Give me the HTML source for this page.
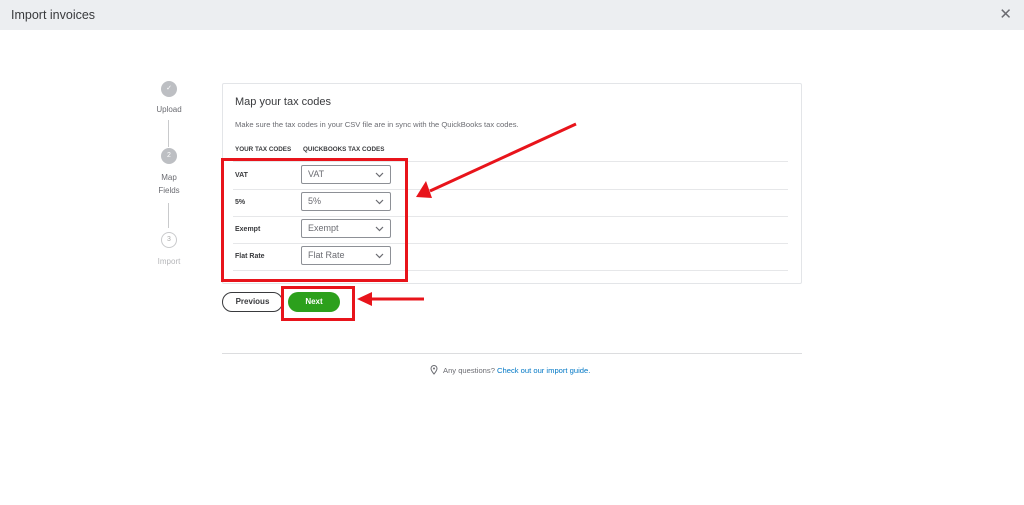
<!DOCTYPE html>
<html><head><meta charset="utf-8"><style>
*{margin:0;padding:0;box-sizing:border-box}
body{width:1024px;height:505px;background:#fff;font-family:"Liberation Sans",sans-serif;color:#393a3d;position:relative;overflow:hidden}
.hdr{position:absolute;left:0;top:0;width:1024px;height:30px;background:#eceef1}
.hdr .t{position:absolute;left:11px;top:8px;font-size:12.5px;color:#393a3d}
.hdr .x{position:absolute;right:12px;top:5px;font-size:15px;color:#6b6c72}
.abs{position:absolute}
.step{position:absolute;width:16px;height:16px;border-radius:50%;left:161px;font-size:7px;color:#fff;text-align:center;line-height:16px}
.lbl{position:absolute;font-size:8px;color:#6b6c72;width:40px;left:149px;text-align:center;line-height:13px}
.vl{position:absolute;left:168px;width:1px;background:#c9cacc}
.card{position:absolute;left:222px;top:83px;width:580px;height:201px;border:1px solid #e3e5e8;border-radius:2px}
.hl{position:absolute;left:233px;width:555px;height:1px;background:#e6e7e9}
.rl{position:absolute;left:235px;font-size:7px;color:#393a3d;font-weight:bold}
.sel{position:absolute;left:301px;width:90px;height:19px;border:1px solid #8d9096;border-radius:2px;font-size:9px;color:#6b6c72;padding:3px 6px}
.sel svg{position:absolute;right:6px;top:6px}
</style></head><body>
<div class="hdr"><span class="t">Import invoices</span><span class="x">✕</span></div>

<div class="step" style="top:81px;background:#bdbfc3">✓</div>
<div class="lbl" style="top:103px">Upload</div>
<div class="vl" style="top:120px;height:27px"></div>
<div class="step" style="top:148px;background:#bdbfc3">2</div>
<div class="lbl" style="top:171px">Map<br>Fields</div>
<div class="vl" style="top:203px;height:25px"></div>
<div class="step" style="top:232px;background:#fff;border:1px solid #c9cacc;color:#aaa;line-height:14px">3</div>
<div class="lbl" style="top:255px;color:#b5b6b9">Import</div>

<div class="card"></div>
<div class="abs" style="left:235px;top:96px;font-size:11px;color:#393a3d">Map your tax codes</div>
<div class="abs" style="left:235px;top:120px;font-size:7.6px;color:#6b6c72">Make sure the tax codes in your CSV file are in sync with the QuickBooks tax codes.</div>
<div class="abs" style="left:235px;top:146px;font-size:6.3px;font-weight:bold;color:#393a3d">YOUR TAX CODES</div>
<div class="abs" style="left:303px;top:146px;font-size:6.3px;font-weight:bold;color:#393a3d">QUICKBOOKS TAX CODES</div>
<div class="hl" style="top:161px"></div>
<div class="hl" style="top:189px"></div>
<div class="hl" style="top:216px"></div>
<div class="hl" style="top:243px"></div>
<div class="hl" style="top:270px"></div>

<div class="rl" style="top:172px">VAT</div>
<div class="rl" style="top:199px">5%</div>
<div class="rl" style="top:226px">Exempt</div>
<div class="rl" style="top:253px">Flat Rate</div>

<div class="sel" style="top:165px">VAT<svg width="9" height="6"><path d="M1 1L4.5 4.5L8 1" stroke="#6b6c72" fill="none" stroke-width="1.2"/></svg></div>
<div class="sel" style="top:192px">5%<svg width="9" height="6"><path d="M1 1L4.5 4.5L8 1" stroke="#6b6c72" fill="none" stroke-width="1.2"/></svg></div>
<div class="sel" style="top:219px">Exempt<svg width="9" height="6"><path d="M1 1L4.5 4.5L8 1" stroke="#6b6c72" fill="none" stroke-width="1.2"/></svg></div>
<div class="sel" style="top:246px">Flat Rate<svg width="9" height="6"><path d="M1 1L4.5 4.5L8 1" stroke="#6b6c72" fill="none" stroke-width="1.2"/></svg></div>

<div class="abs" style="left:222px;top:292px;width:61px;height:20px;border:1px solid #393a3d;border-radius:10px;font-size:8px;font-weight:bold;text-align:center;line-height:18px">Previous</div>
<div class="abs" style="left:288px;top:292px;width:52px;height:20px;background:#2ca01c;border-radius:10px;font-size:8px;font-weight:bold;color:#fff;text-align:center;line-height:20px">Next</div>

<div class="abs" style="left:221px;top:158px;width:187px;height:124px;border:3px solid #e8141b"></div>
<div class="abs" style="left:281px;top:286px;width:74px;height:35px;border:3px solid #e8141b"></div>

<svg class="abs" style="left:0;top:0" width="1024" height="505">
<line x1="576" y1="124" x2="430" y2="191" stroke="#e8141b" stroke-width="3"/>
<polygon points="416,197 426,181 432,198" fill="#e8141b"/>
<line x1="424" y1="299" x2="370" y2="299" stroke="#e8141b" stroke-width="3"/>
<polygon points="357,299 372,292 372,306" fill="#e8141b"/>
</svg>

<div class="abs" style="left:222px;top:353px;width:580px;height:1px;background:#dcdddf"></div>
<svg class="abs" style="left:430px;top:365px" width="8" height="10"><path d="M4 9C4 9 7 5.5 7 3.5A3 3 0 0 0 1 3.5C1 5.5 4 9 4 9Z" stroke="#6b6c72" fill="none" stroke-width="1"/><circle cx="4" cy="3.5" r="1" fill="#6b6c72"/></svg>
<div class="abs" style="left:443px;top:366px;font-size:7.6px;color:#6b6c72">Any questions? <span style="color:#0077c5">Check out our import guide.</span></div>
</body></html>
